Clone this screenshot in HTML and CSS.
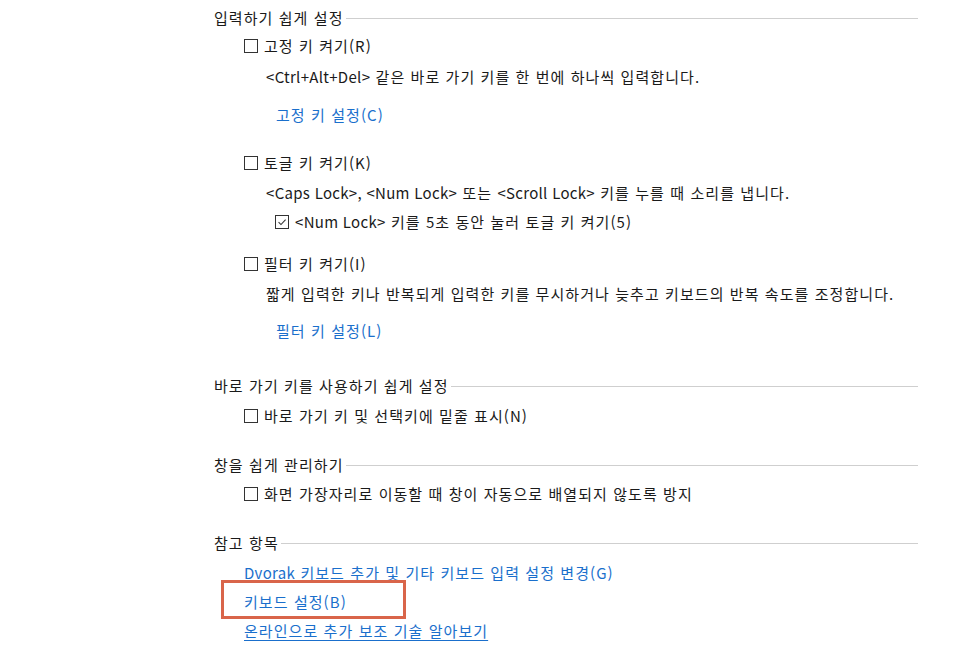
FILE: index.html
```html
<!DOCTYPE html>
<html lang="ko">
<head>
<meta charset="utf-8">
<link rel="stylesheet" href="styles.css">
</head>
<body>
<div class="page">
  <div class="heading h-first"><span>입력하기 쉽게 설정</span><i class="rule"></i></div>
  <div class="row cb mt8"><span class="box"></span>고정 키 켜기(R)</div>
  <div class="row desc mt11"><span class="lat">&lt;Ctrl+Alt+Del&gt;</span> 같은 바로 가기 키를 한 번에 하나씩 입력합니다.</div>
  <div class="row link-in mt18"><a class="link">고정 키 설정(C)</a></div>

  <div class="row cb mt28"><span class="box"></span>토글 키 켜기(K)</div>
  <div class="row desc mt10"><span class="lat">&lt;Caps Lock&gt;, &lt;Num Lock&gt;</span> 또는 <span class="lat">&lt;Scroll Lock&gt;</span> 키를 누를 때 소리를 냅니다.</div>
  <div class="row cb sub mt9"><span class="box checked"><svg viewBox="0 0 14 14" width="14" height="14"><path d="M3 7.2 L5.8 10 L11.2 4.2" fill="none" stroke="#333" stroke-width="1.2"/></svg></span><span class="lat">&lt;Num Lock&gt;</span>&nbsp;키를 5초 동안 눌러 토글 키 켜기(5)</div>

  <div class="row cb mt22"><span class="box"></span>필터 키 켜기(I)</div>
  <div class="row desc mt10">짧게 입력한 키나 반복되게 입력한 키를 무시하거나 늦추고 키보드의 반복 속도를 조정합니다.</div>
  <div class="row link-in mt17"><a class="link">필터 키 설정(L)</a></div>

  <div class="heading mt35"><span>바로 가기 키를 사용하기 쉽게 설정</span><i class="rule"></i></div>
  <div class="row cb mt10"><span class="box"></span>바로 가기 키 및 선택키에 밑줄 표시(N)</div>

  <div class="heading mt29"><span>창을 쉽게 관리하기</span><i class="rule"></i></div>
  <div class="row cb mt9"><span class="box"></span>화면 가장자리로 이동할 때 창이 자동으로 배열되지 않도록 방지</div>

  <div class="heading mt29"><span>참고 항목</span><i class="rule"></i></div>
  <div class="row ref mt10"><a class="link"><span class="lat">Dvorak</span> 키보드 추가 및 기타 키보드 입력 설정 변경(G)</a></div>
  <div class="row ref mt9 marked"><a class="link">키보드 설정(B)</a><span class="highlight"></span></div>
  <div class="row ref mt9"><a class="link underline">온라인으로 추가 보조 기술 알아보기</a></div>
</div>
</body>
</html>
```
FILE: styles.css
```css
html, body {
  margin: 0;
  padding: 0;
  background: #ffffff;
}
body {
  font-family: "Noto Sans CJK KR", "Noto Sans", sans-serif;
  font-size: 15px;
  letter-spacing: 1.07px;
  color: #1a1a1a;
}
.lat {
  letter-spacing: 0.3px;
}
.page {
  margin-left: 214px;
  width: 704px;
  padding-top: 8px;
}
.heading {
  display: flex;
  align-items: center;
  height: 20px;
  line-height: 20px;
  white-space: nowrap;
}
.heading span {
  padding-right: 2px;
}
.rule {
  flex: 1;
  height: 0;
  border-top: 1px solid #cfcfcf;
  margin-top: 1px;
}
.row {
  height: 20px;
  line-height: 20px;
  white-space: nowrap;
}
.cb {
  display: flex;
  align-items: center;
  padding-left: 30px;
}
.cb.sub {
  padding-left: 61px;
}
.box {
  border: 1px solid #333;
  box-sizing: border-box;
  flex: none;
  margin-right: 6px;
  position: relative;
  display: inline-flex;
  align-items: center;
  justify-content: center;
  width: 14px;
  height: 14px;
}
.box svg {
  display: block;
}
.desc {
  padding-left: 52px;
}
.link-in {
  padding-left: 62px;
}
.ref {
  padding-left: 30px;
  position: relative;
}
.link {
  color: #1a6fcc;
  text-decoration: none;
}
.underline {
  text-decoration: underline;
  text-underline-offset: 3px;
}
.highlight {
  position: absolute;
  left: 7px;
  top: -12px;
  width: 185px;
  height: 39px;
  box-sizing: border-box;
  border: 3px solid #d9654a;
}
.mt8 { margin-top: 8px; }
.mt9 { margin-top: 9px; }
.mt10 { margin-top: 10px; }
.mt11 { margin-top: 11px; }
.mt17 { margin-top: 17px; }
.mt18 { margin-top: 18px; }
.mt22 { margin-top: 22px; }
.mt28 { margin-top: 28px; }
.mt29 { margin-top: 29px; }
.mt35 { margin-top: 35px; }
```
